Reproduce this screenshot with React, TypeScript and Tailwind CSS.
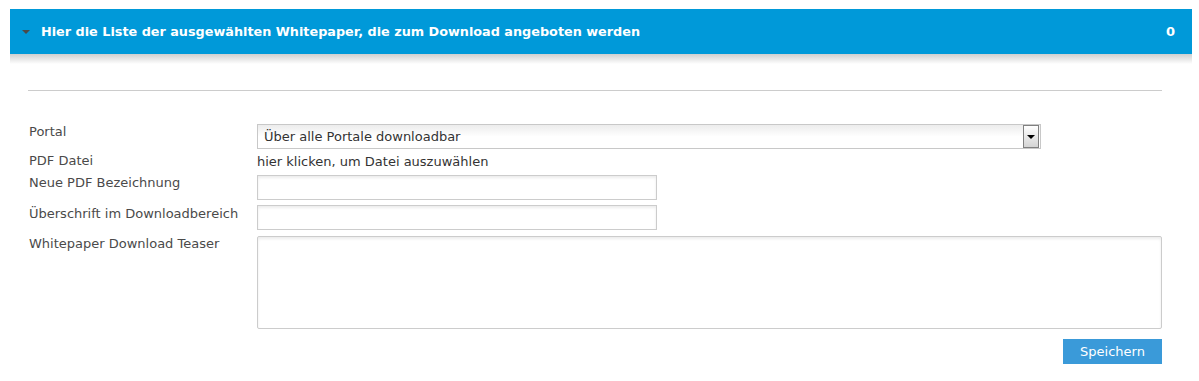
export default function App() {
  const font = { fontFamily: '"DejaVu Sans", Verdana, sans-serif' };
  const field = "border border-[#cccccc] bg-white shadow-[inset_0_2px_3px_rgba(0,0,0,0.08)]";

  return (
    <div className="w-[1199px] h-[381px] bg-white text-[13px] leading-[16px] text-[#4a4a4a]" style={font}>
      {/* Panel header */}
      <div className="pt-[9px] pl-[10px] pr-[7px]">
        <div className="h-[45px] bg-[#0099d9] flex items-center pl-[12px] pr-[17px] text-white font-bold">
          <span className="w-0 h-0 border-l-[4px] border-r-[4px] border-t-[4px] border-l-transparent border-r-transparent border-t-[#4a4a4a] mr-[11px]" />
          <span className="flex-1 text-[12.8px]">Hier die Liste der ausgewählten Whitepaper, die zum Download angeboten werden</span>
          <span>0</span>
        </div>
        <div className="h-[10px] bg-gradient-to-b from-[#cfcfcf] to-white" />
      </div>

      {/* Form */}
      <div className="pl-[28px] pr-[37px]">
        <div className="mt-[26px] border-t border-[#cccccc]" />

        <div className="mt-[33px] grid grid-cols-[229px_1fr] gap-y-[5px]">
          <label className="pl-[1px]">Portal</label>
          <div className="flex">
            <div className="w-[784px] h-[25px] border border-[#c8c8c8] bg-gradient-to-b from-[#ececec] via-white to-white flex items-center pl-[6px] pr-[1px]">
              <span className="flex-1 text-[#333]">Über alle Portale downloadbar</span>
              <span className="w-[16px] h-[23px] border border-[#808080] bg-gradient-to-b from-white to-[#d4d4d4] flex items-center justify-center">
                <span className="w-0 h-0 border-l-[4px] border-r-[4px] border-t-[4px] border-l-transparent border-r-transparent border-t-black" />
              </span>
            </div>
          </div>

          <label className="pl-[1px] -mt-[1px]">PDF Datei</label>
          <div className="-mt-[1px] text-[#333] pt-[1px]">hier klicken, um Datei auszuwählen</div>

          <label className="pl-[1px]">Neue PDF Bezeichnung</label>
          <div className={`w-[400px] h-[25px] ${field}`} />

          <label className="pl-[1px] pt-[1px]">Überschrift im Downloadbereich</label>
          <div className={`w-[400px] h-[25px] ${field}`} />

          <label className="pl-[1px] mt-[1px]">Whitepaper Download Teaser</label>
          <div className={`mt-[1px] h-[93px] rounded-[2px] ${field}`} />
        </div>

        <div className="flex justify-end mt-[10px]">
          <button className="w-[99px] h-[25px] bg-[#3a9ad9] text-white text-[13px]" style={font}>
            Speichern
          </button>
        </div>
      </div>
    </div>
  );
}
